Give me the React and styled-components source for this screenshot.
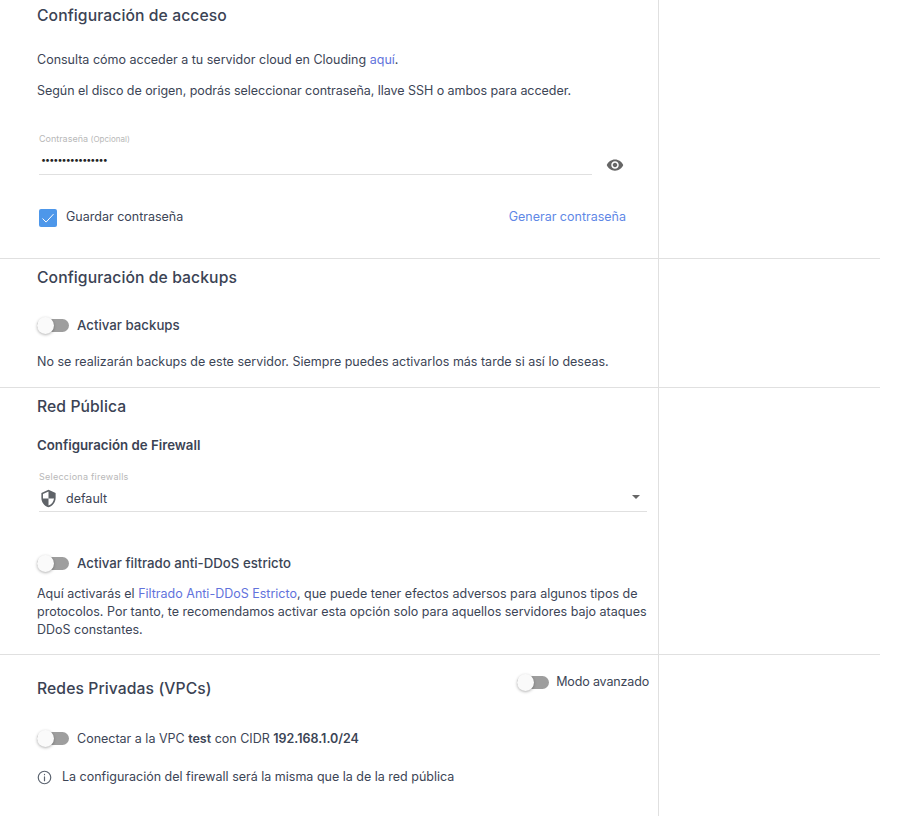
import React from 'react';
import styled, { createGlobalStyle } from 'styled-components';

const GlobalStyle = createGlobalStyle`
  html, body {
    margin: 0;
    background: #fff;
    font-family: Inter, "Liberation Sans", sans-serif;
    font-size: 12.5px;
    color: #3c4556;
  }
`;

const Toggle = ({ className }) => (
  <ToggleTrack className={className}>
    <ToggleKnob />
  </ToggleTrack>
);

const App = () => (
  <>
    <GlobalStyle />
    <Page>
      <Section $height={259}>
        <Column>
          <Title $top={7}>Configuración de acceso</Title>
          <Text $top={26}>
            Consulta cómo acceder a tu servidor cloud en Clouding <Link>aquí</Link>.
          </Text>
          <Text $top={13} $tight>Según el disco de origen, podrás seleccionar contraseña, llave SSH o ambos para acceder.</Text>
          <PasswordRow>
            <Field $width={553}>
              <FieldLabel>
                Contraseña <small>(Opcional)</small>
              </FieldLabel>
              <FieldValue>
                <Dots>••••••••••••••••</Dots>
              </FieldValue>
            </Field>
            <EyeIcon viewBox="0 0 24 24">
              <path d="M12 4.5C7 4.5 2.73 7.61 1 12c1.73 4.39 6 7.5 11 7.5s9.27-3.11 11-7.5c-1.73-4.39-6-7.5-11-7.5zM12 17c-2.76 0-5-2.24-5-5s2.24-5 5-5 5 2.24 5 5-2.24 5-5 5zm0-8c-1.66 0-3 1.34-3 3s1.34 3 3 3 3-1.34 3-3-1.34-3-3-3z" />
            </EyeIcon>
          </PasswordRow>
          <SaveRow>
            <CheckLabel>
              <CheckBox>
                <svg viewBox="0 0 18 18" width="18" height="18">
                  <path d="M3.5 9.5l3.6 3.6 7.4-8" fill="none" stroke="#fff" strokeWidth="1" />
                </svg>
              </CheckBox>
              Guardar contraseña
            </CheckLabel>
            <GenerateLink>Generar contraseña</GenerateLink>
          </SaveRow>
        </Column>
      </Section>

      <Section $height={129}>
        <Column>
          <Title $top={10}>Configuración de backups</Title>
          <ToggleRow $top={29}>
            <Toggle />
            <Strong>Activar backups</Strong>
          </ToggleRow>
          <Text $top={19}>No se realizarán backups de este servidor. Siempre puedes activarlos más tarde si así lo deseas.</Text>
        </Column>
      </Section>

      <Section $height={267}>
        <Column>
          <Title $top={10}>Red Pública</Title>
          <SubTitle>Configuración de Firewall</SubTitle>
          <Field $width={608} $top={17}>
            <FieldLabel $spaced>Selecciona firewalls</FieldLabel>
            <SelectValue>
              <ShieldIcon viewBox="0 0 24 24">
                <path d="M12 1L3 5v6c0 5.55 3.84 10.74 9 12 5.16-1.26 9-6.45 9-12V5l-9-4zm0 10.99h7c-.53 4.12-3.28 7.79-7 8.94V12H5V6.3l7-3.11v8.8z" />
              </ShieldIcon>
              default
              <Caret />
            </SelectValue>
          </Field>
          <ToggleRow $top={42}>
            <Toggle />
            <Strong>Activar filtrado anti-DDoS estricto</Strong>
          </ToggleRow>
          <Paragraph>
            Aquí activarás el <Link>Filtrado Anti-DDoS Estricto</Link>, que puede tener efectos adversos para algunos tipos de
            protocolos. Por tanto, te recomendamos activar esta opción solo para aquellos servidores bajo ataques DDoS constantes.
          </Paragraph>
        </Column>
      </Section>

      <Section $height={161} $last>
        <Column>
          <HeaderRow>
            <Title $top={0}>Redes Privadas (VPCs)</Title>
            <AdvancedToggle>
              <Toggle />
              <AdvancedLabel>Modo avanzado</AdvancedLabel>
            </AdvancedToggle>
          </HeaderRow>
          <ToggleRow $top={31}>
            <Toggle />
            <span>
              Conectar a la VPC <b>test</b> con CIDR <b>192.168.1.0/24</b>
            </span>
          </ToggleRow>
          <InfoRow>
            <InfoIcon viewBox="0 0 24 24" fill="none" stroke="#5c6470" strokeWidth="1.9" strokeLinecap="round">
              <circle cx="12" cy="12" r="10" />
              <path d="M12 11v6" />
              <path d="M12 7v.6" />
            </InfoIcon>
            La configuración del firewall será la misma que la de la red pública
          </InfoRow>
        </Column>
      </Section>
    </Page>
  </>
);

const Page = styled.div`
  width: 880px;
  height: 816px;
  overflow: hidden;
`;

const Section = styled.section`
  height: ${(p) => p.$height}px;
  box-sizing: border-box;
  border-bottom: ${(p) => (p.$last ? 'none' : '1px solid #e0e0e0')};
`;

const Column = styled.div`
  width: 659px;
  height: 100%;
  box-sizing: border-box;
  padding-left: 37px;
  border-right: 1px solid #e0e0e0;
  display: flex;
  flex-direction: column;
  align-items: flex-start;
`;

const Title = styled.h2`
  margin: ${(p) => p.$top}px 0 0;
  font-size: 15.7px;
  line-height: 18px;
  font-weight: 500;
  letter-spacing: 0.09px;
  color: #3b4354;
`;

const SubTitle = styled.h3`
  margin: 20px 0 0;
  font-size: 13.25px;
  line-height: 18px;
  font-weight: 600;
  color: #3b4354;
`;

const Text = styled.p`
  margin: ${(p) => p.$top}px 0 0;
  line-height: 18px;
  white-space: nowrap;
  letter-spacing: ${(p) => (p.$tight ? '-0.045px' : '0')};
`;

const Paragraph = styled.p`
  margin: 13px 0 0;
  width: 612px;
  line-height: 18px;
`;

const Link = styled.a`
  color: #6273dc;
`;

const PasswordRow = styled.div`
  display: flex;
  align-items: flex-end;
  margin: 33px 0 0 2px;
`;

const Field = styled.div`
  width: ${(p) => p.$width}px;
  margin-top: ${(p) => p.$top || 0}px;
  margin-left: ${(p) => (p.$top ? 2 : 0)}px;
  border-bottom: 1px solid #e0e0e0;
`;

const FieldLabel = styled.div`
  font-size: 9px;
  line-height: 12px;
  color: #b8b8b8;
  letter-spacing: ${(p) => (p.$spaced ? '0.25px' : '0')};

  small {
    font-size: 8px;
  }
`;

const FieldValue = styled.div`
  height: 29px;
  padding-left: 2px;
  display: flex;
  align-items: center;
`;

const Dots = styled.span`
  font-size: 9px;
  letter-spacing: -0.95px;
  color: #222;
`;

const EyeIcon = styled.svg`
  width: 18px;
  height: 18px;
  fill: #666;
  margin: 0 0 1px 14px;
`;

const SaveRow = styled.div`
  display: flex;
  justify-content: space-between;
  align-items: center;
  width: 587px;
  margin-top: 30px;
  margin-left: 2px;
`;

const CheckLabel = styled.label`
  display: flex;
  align-items: center;
  gap: 9px;
`;

const CheckBox = styled.span`
  display: block;
  width: 18px;
  height: 18px;
  margin-top: 4px;
  border-radius: 2px;
  background: #4d97ea;
`;

const GenerateLink = styled.a`
  color: #5f88e6;
`;

const ToggleRow = styled.div`
  display: flex;
  align-items: center;
  gap: 8px;
  height: 18px;
  margin-top: ${(p) => p.$top}px;

  b {
    font-weight: 600;
  }
`;

const ToggleTrack = styled.span`
  display: block;
  position: relative;
  width: 32px;
  height: 13px;
  border-radius: 7px;
  background: #9e9e9e;
`;

const ToggleKnob = styled.span`
  position: absolute;
  left: 0;
  top: -2px;
  width: 17px;
  height: 17px;
  border-radius: 50%;
  background: #fafafa;
  box-shadow: 0 1px 3px rgba(0, 0, 0, 0.3);
`;

const Strong = styled.span`
  font-size: 13.25px;
  font-weight: 500;
`;

const SelectValue = styled.div`
  display: flex;
  align-items: center;
  gap: 8px;
  height: 28px;
  box-sizing: border-box;
  padding-top: 2px;
  position: relative;
`;

const ShieldIcon = styled.svg`
  width: 19px;
  height: 19px;
  fill: #5f6368;
`;

const Caret = styled.span`
  position: absolute;
  right: 7px;
  top: 12px;
  border-left: 4px solid transparent;
  border-right: 4px solid transparent;
  border-top: 4px solid #666;
`;

const HeaderRow = styled.div`
  display: flex;
  justify-content: space-between;
  width: 612px;
  margin-top: 25px;
`;

const AdvancedToggle = styled.div`
  display: flex;
  align-items: center;
  gap: 7px;
  height: 18px;
  margin-top: -7px;
`;

const AdvancedLabel = styled.span`
  letter-spacing: -0.15px;
  margin-bottom: 2px;
`;

const InfoRow = styled.div`
  display: flex;
  align-items: center;
  gap: 10px;
  margin-top: 21px;
  line-height: 18px;
`;

const InfoIcon = styled.svg`
  width: 15px;
  height: 15px;
`;

export default App;
